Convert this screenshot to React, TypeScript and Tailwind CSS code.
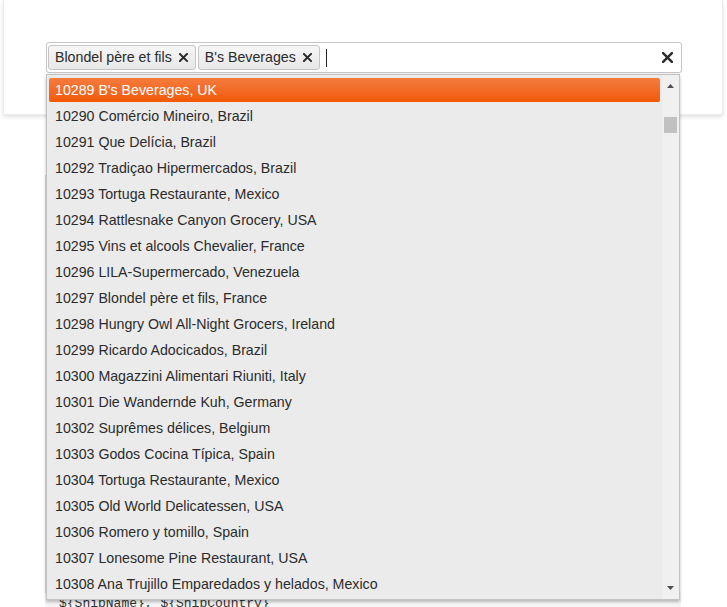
import React from 'react'

const orders = [
  '10289 B\'s Beverages, UK',
  '10290 Comércio Mineiro, Brazil',
  '10291 Que Delícia, Brazil',
  '10292 Tradiçao Hipermercados, Brazil',
  '10293 Tortuga Restaurante, Mexico',
  '10294 Rattlesnake Canyon Grocery, USA',
  '10295 Vins et alcools Chevalier, France',
  '10296 LILA-Supermercado, Venezuela',
  '10297 Blondel père et fils, France',
  '10298 Hungry Owl All-Night Grocers, Ireland',
  '10299 Ricardo Adocicados, Brazil',
  '10300 Magazzini Alimentari Riuniti, Italy',
  '10301 Die Wandernde Kuh, Germany',
  '10302 Suprêmes délices, Belgium',
  '10303 Godos Cocina Típica, Spain',
  '10304 Tortuga Restaurante, Mexico',
  '10305 Old World Delicatessen, USA',
  '10306 Romero y tomillo, Spain',
  '10307 Lonesome Pine Restaurant, USA',
  '10308 Ana Trujillo Emparedados y helados, Mexico',
]

const tags = ['Blondel père et fils', "B's Beverages"]

const XIcon = ({ size = 9 }: { size?: number }) => (
  <svg width={size} height={size} viewBox="0 0 10 10" className="shrink-0">
    <path d="M1 1 L9 9 M9 1 L1 9" stroke="#2b2b2b" strokeWidth="2.2" strokeLinecap="square" />
  </svg>
)

const Tag = ({ label }: { label: string }) => (
  <div className="flex h-[25px] items-center gap-[7px] rounded-[3px] border border-[#c5c5c5] bg-gradient-to-b from-[#f6f6f6] to-[#e8e8e8] pl-[6px] pr-[7px] text-[14.2px] text-[#2b2b2b]">
    <span>{label}</span>
    <XIcon />
  </div>
)

const App = () => {
  return (
    <div
      className="relative h-[607px] w-[727px] overflow-hidden bg-white"
      style={{ fontFamily: '"Liberation Sans", Arial, sans-serif' }}
    >
      {/* demo card */}
      <div className="mx-[3px] h-[115px] w-[720px] border border-t-0 border-[#ececec] bg-white pt-[42px] pl-[42px] shadow-[0_2px_4px_rgba(0,0,0,0.12)]">
        <div className="flex h-[31px] w-[636px] items-center rounded-[3px] border border-[#c5c5c5] bg-white pl-[1px] pr-[8px] shadow-[0_1px_1px_rgba(0,0,0,0.06)]">
          <div className="flex items-center gap-[2px]">
            {tags.map((t) => (
              <Tag key={t} label={t} />
            ))}
          </div>
          <div className="ml-[6px] h-[18px] w-px bg-[#222]" />
          <div className="flex-1" />
          <XIcon size={11} />
        </div>
      </div>

      {/* page content behind popup */}
      <div className="ml-[45px] mt-[60px] flex w-[636px] flex-col">
        <div className="h-[418px] border-l border-[#d8d8d8]" />
        <div className="h-[40px] bg-[#f5f5f5] pl-[14px] pt-[1px] text-[13px] text-[#333]" style={{ fontFamily: '"Liberation Mono", monospace' }}>
          {'${ShipName}, ${ShipCountry}'}
        </div>
      </div>

      {/* dropdown popup */}
      <div className="absolute left-[46px] top-[74px] flex h-[526px] w-[634px] border border-[#c3c3c3] bg-[#ebebeb] shadow-[0_2px_3px_rgba(0,0,0,0.25)]">
        <ul className="flex-1 pl-[2px] pr-[2px] pt-[2px] text-[14.2px] text-[#2b2b2b]">
          {orders.map((o, i) => (
            <li key={o} className="flex h-[26px] items-center">
              {i === 0 ? (
                <div className="flex h-[24px] w-full items-center rounded-[2px] bg-gradient-to-b from-[#f47c3c] to-[#f35800] pl-[6px] pt-[2px] text-white">
                  {o}
                </div>
              ) : (
                <div className="pl-[6px] pt-[2px]">{o}</div>
              )}
            </li>
          ))}
        </ul>
        <div className="flex w-[17px] flex-col items-center bg-[#f0f0f0] py-[9px]">
          <svg width="7" height="4" viewBox="0 0 7 4">
            <path d="M0 4 L3.5 0 L7 4 Z" fill="#505050" />
          </svg>
          <div className="mt-[29px] h-[16px] w-[13px] bg-[#c1c1c1]" />
          <div className="flex-1" />
          <svg width="7" height="4" viewBox="0 0 7 4">
            <path d="M0 0 L7 0 L3.5 4 Z" fill="#505050" />
          </svg>
        </div>
      </div>
    </div>
  )
}

export default App
